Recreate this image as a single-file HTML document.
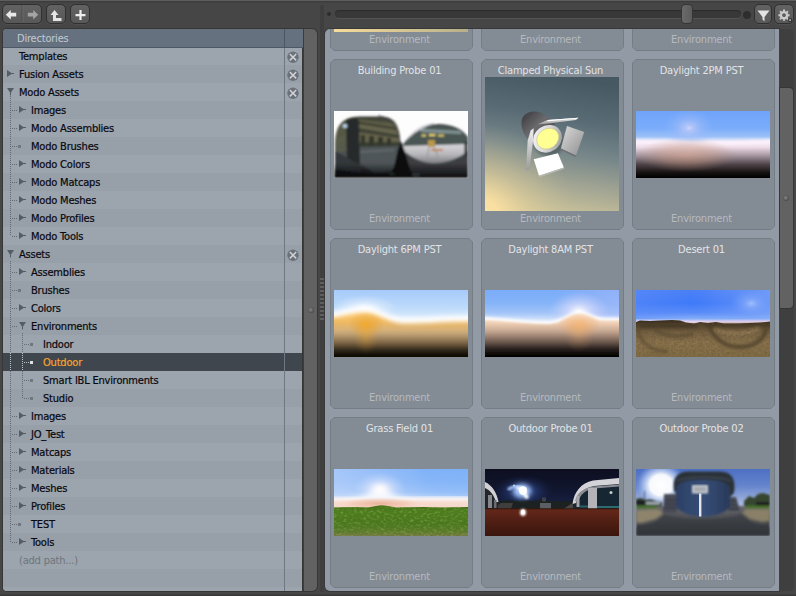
<!DOCTYPE html>
<html lang="en"><head><meta charset="utf-8"><title>Preset Browser</title>
<style>
html,body{margin:0;padding:0;background:#464646;}
body{width:796px;height:596px;overflow:hidden;font-family:"DejaVu Sans Condensed","DejaVu Sans","Liberation Sans",sans-serif;font-size:11px;letter-spacing:-0.2px;}
#app{position:relative;width:796px;height:596px;overflow:hidden;background:#464646;}
#app i{display:block;position:absolute;}
#topline{position:absolute;left:0;top:0;width:796px;height:3px;background:linear-gradient(#5e5e5e 0 1px,#3d3d3d 1px 2px,#424242 2px 3px);}
#botline{position:absolute;left:0;top:594px;width:796px;height:2px;background:linear-gradient(#3e3e3e 0 1px,#383838 1px 2px);}
.btn{position:absolute;top:4px;height:20px;box-sizing:border-box;border:1px solid #303030;border-radius:5px;background:linear-gradient(#626262,#585858);box-shadow:0 1px 0 rgba(255,255,255,.05);}
.btn svg{position:absolute;left:0;top:0;}
#track{position:absolute;left:335px;top:10px;width:406px;height:8px;border-radius:4px;background:#383838;box-shadow:inset 0 1px 1px #2c2c2c,0 1px 0 rgba(255,255,255,.07);}
#handle{position:absolute;left:681px;top:4px;width:12px;height:20px;box-sizing:border-box;border:1px solid #353535;border-radius:4px;background:linear-gradient(90deg,#6a6a6a,#5c5c5c);}
.dot{position:absolute;border-radius:50%;background:#2e2e2e;}
/* left panel */
#left{position:absolute;left:3px;top:29px;width:300px;height:562px;background:#99a1aa;overflow:hidden;border-radius:4px 0 0 4px;box-shadow:0 0 0 1px #363636;}
#lhead{position:absolute;left:0;top:0;width:300px;height:18px;background:#65717e;color:#c3cad2;z-index:3;}
#lline{position:absolute;left:0;top:18px;width:300px;height:1px;background:#4c5864;z-index:3;}
#lhead span{position:absolute;left:14px;top:3px;line-height:14px;}
.row{position:absolute;left:0;width:300px;height:18px;background:#9ca4ad;}
.row.odd{background:#979fa8;}
.row.sel{background:#3f464e;}
.row .tx{position:absolute;top:3px;line-height:14px;color:#08080f;white-space:nowrap;-webkit-text-stroke:0.2px #08080f;}
.row .tx.dim{color:#6d757e;-webkit-text-stroke:0;}
.row.sel .tx{color:#f5a52d;-webkit-text-stroke:0.2px #f5a52d;}
.row .ar{position:absolute;fill:#555c64;}
.row .bl{width:3px;height:3px;top:8px;background:#70777f;}
.row.sel .bl{background:#dfe2e5;}
.row .hd{width:5px;height:1px;top:9px;background:repeating-linear-gradient(90deg,#646a72 0 1px,transparent 1px 2px);}
.row.sel .hd{background:repeating-linear-gradient(90deg,#bcc0c4 0 1px,transparent 1px 2px);}
.row .xx{position:absolute;left:284px;top:4px;}
.vd{width:1px;background:repeating-linear-gradient(180deg,#646a72 0 1px,transparent 1px 2px);}
.vd.lt{background:repeating-linear-gradient(180deg,#bcc0c4 0 1px,#3f464e 1px 2px);}
#colsep{left:281px;top:0;width:1px;height:562px;background:linear-gradient(#4c5662 0 19px,#6e7782 19px);z-index:4;}
/* splitter */
#split{position:absolute;left:303px;top:29px;width:14px;height:562px;background:#626262;border-radius:0 5px 5px 0;border-left:1px solid #3c3c3c;box-sizing:border-box;box-shadow:0 0 0 1px #363636;}
.knob{left:4px;top:278px;width:6px;height:6px;border-radius:50%;background:radial-gradient(circle at 45% 45%,#767676 0 25%,#444 75%);}
#gap{position:absolute;left:320px;top:5px;width:4px;height:587px;background:#3f3f3f;}
#grip{position:absolute;left:320px;top:278px;width:4px;height:43px;background:repeating-linear-gradient(180deg,#5e5e5e 0 2px,#3f3f3f 2px 4px);}
/* right panel */
#right{position:absolute;left:325px;top:29px;width:454px;height:562px;background:#929ba5;overflow:hidden;border-radius:5px 0 0 5px;box-shadow:0 0 0 1px #383838;}
.tile{position:absolute;width:143px;height:171px;}
.tile svg.bg{position:absolute;left:0;top:0;}
.tile .tt{position:absolute;left:0;width:139px;top:5px;line-height:14px;text-align:center;color:#e2e4e6;white-space:nowrap;}
.tile .tb{position:absolute;left:0;width:139px;top:153px;line-height:14px;text-align:center;color:#b6babf;white-space:nowrap;}
.tile .im{position:absolute;left:4px;top:52px;width:134px;height:67px;overflow:hidden;}
.tile .im svg{display:block;}
/* scrollbar */
#sbar{position:absolute;left:779px;top:29px;width:15px;height:562px;background:#3f3f3f;border-radius:0 5px 5px 0;}
#sthumb{left:1px;top:59px;width:13px;height:220px;background:#626262;border-radius:0 4px 4px 0;box-shadow:0 0 0 1px #363636;}
.knob2{left:4px;top:166px;width:6px;height:6px;border-radius:50%;background:radial-gradient(circle at 45% 45%,#767676 0 25%,#444 75%);}

</style></head><body>
<div id="app">
<div id="topline"></div><div id="botline"></div>
<div class="btn" style="left:2px;width:40px;">
<svg style="left:1px" width="38" height="19" viewBox="0 0 38 19"><rect x="17.5" y="0" width="1" height="17" fill="#4a4a4a"/><rect x="18.5" y="0" width="1" height="17" fill="#686868"/>
<path d="M1.8 9.7 L6.8 5 L6.8 7.8 L12.2 7.8 L12.2 11.6 L6.8 11.6 L6.8 14.4Z" fill="#e8e8e8"/>
<path d="M34.2 9.7 L29.2 5 L29.2 7.8 L23.8 7.8 L23.8 11.6 L29.2 11.6 L29.2 14.4Z" fill="#a4a4a4"/></svg>
</div>
<div class="btn" style="left:46px;width:20px;">
<svg style="left:1px" width="19" height="19" viewBox="0 0 19 19"><path d="M6.5 5 L10.5 10 L8 10 L8 13 L13.5 13 L13.5 16 L5 16 L5 10 L2.5 10Z" fill="#e6e6e6"/></svg>
</div>
<div class="btn" style="left:70px;width:20px;">
<svg style="left:1px" width="19" height="19" viewBox="0 0 19 19"><path d="M7.4 5.1 h2.2 v3.9 h3.9 v2.2 h-3.9 v3.9 h-2.2 v-3.9 h-3.9 v-2.2 h3.9z" fill="#eeeeee"/></svg>
</div>
<div class="dot" style="left:327px;top:12px;width:4px;height:4px;"></div>
<div id="track"></div>
<div id="handle"></div>
<div class="dot" style="left:743px;top:11px;width:8px;height:8px;"></div>
<div class="btn" style="left:754px;width:18px;">
<svg style="left:1px" width="17" height="19" viewBox="0 0 17 19"><path d="M1.5 5.5 L13.5 5.5 L8.5 12 L8.5 16.5 L6.5 14.5 L6.5 12Z" fill="#e2e2e2"/></svg>
</div>
<div class="btn" style="left:774px;width:20px;">
<svg style="left:1px" width="19" height="19" viewBox="0 0 19 19"><g transform="translate(8,10.2)"><circle r="3.1" fill="none" stroke="#cccccc" stroke-width="2.4"/><g stroke="#cccccc" stroke-width="2"><path d="M0 -5.6 V-4 M0 5.6 V4 M-5.6 0 H-4 M5.6 0 H4 M-4 -4 L-2.8 -2.8 M4 4 L2.8 2.8 M-4 4 L-2.8 2.8 M4 -4 L2.8 -2.8"/></g></g><rect x="12.8" y="13.8" width="2.6" height="2.6" fill="#cfcfcf" stroke="#2a2a2a" stroke-width="1"/></svg>
</div>
<div id="left">
<div id="lhead"><span>Directories</span></div><div id="lline"></div>
<div class="row" style="top:18px"><span class="tx" style="left:16px">Templates</span><svg class="xx" width="12" height="12" viewBox="0 0 12 12"><circle cx="6" cy="6.2" r="5.7" fill="#6b7179"/><path d="M2.8 3 L9.2 9.4 M9.2 3 L2.8 9.4" stroke="#cfd2d6" stroke-width="1.5" fill="none"/></svg></div>
<div class="row odd" style="top:36px"><svg class="ar" style="left:4px;top:5px" width="8" height="8" viewBox="0 0 8 8"><path d="M0 0 L4.5 3 L7 3 L7 4 L4.5 4 L0 7Z"/></svg><span class="tx" style="left:16px">Fusion Assets</span><svg class="xx" width="12" height="12" viewBox="0 0 12 12"><circle cx="6" cy="6.2" r="5.7" fill="#6b7179"/><path d="M2.8 3 L9.2 9.4 M9.2 3 L2.8 9.4" stroke="#cfd2d6" stroke-width="1.5" fill="none"/></svg></div>
<div class="row" style="top:54px"><svg class="ar" style="left:4px;top:5px" width="8" height="9" viewBox="0 0 8 9"><path d="M0 0 L7 0 L4 4.5 L4 7.5 L3 7.5 L3 4.5Z"/></svg><span class="tx" style="left:16px">Modo Assets</span><svg class="xx" width="12" height="12" viewBox="0 0 12 12"><circle cx="6" cy="6.2" r="5.7" fill="#6b7179"/><path d="M2.8 3 L9.2 9.4 M9.2 3 L2.8 9.4" stroke="#cfd2d6" stroke-width="1.5" fill="none"/></svg></div>
<div class="row odd" style="top:72px"><i class="hd" style="left:9px"></i><svg class="ar" style="left:16px;top:5px" width="8" height="8" viewBox="0 0 8 8"><path d="M0 0 L4.5 3 L7 3 L7 4 L4.5 4 L0 7Z"/></svg><span class="tx" style="left:28px">Images</span></div>
<div class="row" style="top:90px"><i class="hd" style="left:9px"></i><svg class="ar" style="left:16px;top:5px" width="8" height="8" viewBox="0 0 8 8"><path d="M0 0 L4.5 3 L7 3 L7 4 L4.5 4 L0 7Z"/></svg><span class="tx" style="left:28px">Modo Assemblies</span></div>
<div class="row odd" style="top:108px"><i class="hd" style="left:9px"></i><i class="bl" style="left:15px"></i><span class="tx" style="left:28px">Modo Brushes</span></div>
<div class="row" style="top:126px"><i class="hd" style="left:9px"></i><svg class="ar" style="left:16px;top:5px" width="8" height="8" viewBox="0 0 8 8"><path d="M0 0 L4.5 3 L7 3 L7 4 L4.5 4 L0 7Z"/></svg><span class="tx" style="left:28px">Modo Colors</span></div>
<div class="row odd" style="top:144px"><i class="hd" style="left:9px"></i><svg class="ar" style="left:16px;top:5px" width="8" height="8" viewBox="0 0 8 8"><path d="M0 0 L4.5 3 L7 3 L7 4 L4.5 4 L0 7Z"/></svg><span class="tx" style="left:28px">Modo Matcaps</span></div>
<div class="row" style="top:162px"><i class="hd" style="left:9px"></i><svg class="ar" style="left:16px;top:5px" width="8" height="8" viewBox="0 0 8 8"><path d="M0 0 L4.5 3 L7 3 L7 4 L4.5 4 L0 7Z"/></svg><span class="tx" style="left:28px">Modo Meshes</span></div>
<div class="row odd" style="top:180px"><i class="hd" style="left:9px"></i><svg class="ar" style="left:16px;top:5px" width="8" height="8" viewBox="0 0 8 8"><path d="M0 0 L4.5 3 L7 3 L7 4 L4.5 4 L0 7Z"/></svg><span class="tx" style="left:28px">Modo Profiles</span></div>
<div class="row" style="top:198px"><i class="hd" style="left:9px"></i><svg class="ar" style="left:16px;top:5px" width="8" height="8" viewBox="0 0 8 8"><path d="M0 0 L4.5 3 L7 3 L7 4 L4.5 4 L0 7Z"/></svg><span class="tx" style="left:28px">Modo Tools</span></div>
<div class="row odd" style="top:216px"><svg class="ar" style="left:4px;top:5px" width="8" height="9" viewBox="0 0 8 9"><path d="M0 0 L7 0 L4 4.5 L4 7.5 L3 7.5 L3 4.5Z"/></svg><span class="tx" style="left:16px">Assets</span><svg class="xx" width="12" height="12" viewBox="0 0 12 12"><circle cx="6" cy="6.2" r="5.7" fill="#6b7179"/><path d="M2.8 3 L9.2 9.4 M9.2 3 L2.8 9.4" stroke="#cfd2d6" stroke-width="1.5" fill="none"/></svg></div>
<div class="row" style="top:234px"><i class="hd" style="left:9px"></i><svg class="ar" style="left:16px;top:5px" width="8" height="8" viewBox="0 0 8 8"><path d="M0 0 L4.5 3 L7 3 L7 4 L4.5 4 L0 7Z"/></svg><span class="tx" style="left:28px">Assemblies</span></div>
<div class="row odd" style="top:252px"><i class="hd" style="left:9px"></i><i class="bl" style="left:15px"></i><span class="tx" style="left:28px">Brushes</span></div>
<div class="row" style="top:270px"><i class="hd" style="left:9px"></i><svg class="ar" style="left:16px;top:5px" width="8" height="8" viewBox="0 0 8 8"><path d="M0 0 L4.5 3 L7 3 L7 4 L4.5 4 L0 7Z"/></svg><span class="tx" style="left:28px">Colors</span></div>
<div class="row odd" style="top:288px"><i class="hd" style="left:9px"></i><svg class="ar" style="left:16px;top:5px" width="8" height="9" viewBox="0 0 8 9"><path d="M0 0 L7 0 L4 4.5 L4 7.5 L3 7.5 L3 4.5Z"/></svg><span class="tx" style="left:28px">Environments</span></div>
<div class="row" style="top:306px"><i class="hd" style="left:21px"></i><i class="bl" style="left:27px"></i><span class="tx" style="left:40px">Indoor</span></div>
<div class="row odd sel" style="top:324px"><i class="hd" style="left:21px"></i><i class="bl" style="left:27px"></i><span class="tx" style="left:40px">Outdoor</span></div>
<div class="row" style="top:342px"><i class="hd" style="left:21px"></i><i class="bl" style="left:27px"></i><span class="tx" style="left:40px">Smart IBL Environments</span></div>
<div class="row odd" style="top:360px"><i class="hd" style="left:21px"></i><i class="bl" style="left:27px"></i><span class="tx" style="left:40px">Studio</span></div>
<div class="row" style="top:378px"><i class="hd" style="left:9px"></i><svg class="ar" style="left:16px;top:5px" width="8" height="8" viewBox="0 0 8 8"><path d="M0 0 L4.5 3 L7 3 L7 4 L4.5 4 L0 7Z"/></svg><span class="tx" style="left:28px">Images</span></div>
<div class="row odd" style="top:396px"><i class="hd" style="left:9px"></i><svg class="ar" style="left:16px;top:5px" width="8" height="8" viewBox="0 0 8 8"><path d="M0 0 L4.5 3 L7 3 L7 4 L4.5 4 L0 7Z"/></svg><span class="tx" style="left:28px">JO_Test</span></div>
<div class="row" style="top:414px"><i class="hd" style="left:9px"></i><svg class="ar" style="left:16px;top:5px" width="8" height="8" viewBox="0 0 8 8"><path d="M0 0 L4.5 3 L7 3 L7 4 L4.5 4 L0 7Z"/></svg><span class="tx" style="left:28px">Matcaps</span></div>
<div class="row odd" style="top:432px"><i class="hd" style="left:9px"></i><svg class="ar" style="left:16px;top:5px" width="8" height="8" viewBox="0 0 8 8"><path d="M0 0 L4.5 3 L7 3 L7 4 L4.5 4 L0 7Z"/></svg><span class="tx" style="left:28px">Materials</span></div>
<div class="row" style="top:450px"><i class="hd" style="left:9px"></i><svg class="ar" style="left:16px;top:5px" width="8" height="8" viewBox="0 0 8 8"><path d="M0 0 L4.5 3 L7 3 L7 4 L4.5 4 L0 7Z"/></svg><span class="tx" style="left:28px">Meshes</span></div>
<div class="row odd" style="top:468px"><i class="hd" style="left:9px"></i><svg class="ar" style="left:16px;top:5px" width="8" height="8" viewBox="0 0 8 8"><path d="M0 0 L4.5 3 L7 3 L7 4 L4.5 4 L0 7Z"/></svg><span class="tx" style="left:28px">Profiles</span></div>
<div class="row" style="top:486px"><i class="hd" style="left:9px"></i><i class="bl" style="left:15px"></i><span class="tx" style="left:28px">TEST</span></div>
<div class="row odd" style="top:504px"><i class="hd" style="left:9px"></i><svg class="ar" style="left:16px;top:5px" width="8" height="8" viewBox="0 0 8 8"><path d="M0 0 L4.5 3 L7 3 L7 4 L4.5 4 L0 7Z"/></svg><span class="tx" style="left:28px">Tools</span></div>
<div class="row" style="top:522px"><span class="tx dim" style="left:16px">(add path...)</span></div>
<div class="row odd" style="top:540px"></div>
<div class="row" style="top:558px"></div>
<i class="vd" style="left:7px;top:67px;height:140px"></i>
<i class="vd" style="left:7px;top:232px;height:281px"></i>
<i class="vd" style="left:19px;top:304px;height:65px"></i>
<i class="vd lt" style="left:7px;top:324px;height:18px"></i>
<i class="vd lt" style="left:19px;top:324px;height:18px"></i>
<i id="colsep"></i>
</div>
<div id="split"><i class="knob"></i></div>
<div id="gap"></div><div id="grip"></div>
<div id="right">
<div class="tile" style="left:5px;top:-149px"><svg class="bg" width="143" height="171" viewBox="0 0 143 171"><polygon points="4,0.5 139,0.5 142.5,4 142.5,167 139,170.5 4,170.5 0.5,167 0.5,4" fill="#838b94" stroke="#747c86" stroke-width="1"/></svg><div class="im" style="top:18px;height:134px"><svg width="134" height="134" viewBox="0 0 134 134"><defs><linearGradient id="gs" x1="0" y1="0" x2="1" y2="0"><stop offset="0" stop-color="#f5dc9a"/><stop offset="1" stop-color="#b8b08c"/></linearGradient></defs><rect width="134" height="134" fill="url(#gs)"/></svg>
</div><div class="tb">Environment</div></div>
<div class="tile" style="left:156px;top:-149px"><svg class="bg" width="143" height="171" viewBox="0 0 143 171"><polygon points="4,0.5 139,0.5 142.5,4 142.5,167 139,170.5 4,170.5 0.5,167 0.5,4" fill="#838b94" stroke="#747c86" stroke-width="1"/></svg><div class="tb">Environment</div></div>
<div class="tile" style="left:307px;top:-149px"><svg class="bg" width="143" height="171" viewBox="0 0 143 171"><polygon points="4,0.5 139,0.5 142.5,4 142.5,167 139,170.5 4,170.5 0.5,167 0.5,4" fill="#838b94" stroke="#747c86" stroke-width="1"/></svg><div class="tb">Environment</div></div>
<div class="tile" style="left:5px;top:30px"><svg class="bg" width="143" height="171" viewBox="0 0 143 171"><polygon points="4,0.5 139,0.5 142.5,4 142.5,167 139,170.5 4,170.5 0.5,167 0.5,4" fill="#838b94" stroke="#747c86" stroke-width="1"/></svg><div class="tt">Building Probe 01</div><div class="im" style=""><svg width="134" height="67" viewBox="0 0 134 67"><defs>
<filter id="bpf" x="-10%" y="-10%" width="120%" height="120%"><feGaussianBlur stdDeviation="0.9"/></filter>
<filter id="bpg" x="-30%" y="-30%" width="160%" height="160%"><feGaussianBlur stdDeviation="2"/></filter>
<linearGradient id="bpa" gradientUnits="userSpaceOnUse" x1="0" y1="5" x2="0" y2="67"><stop offset="0" stop-color="#34382f"/><stop offset="0.15" stop-color="#5a5c48"/><stop offset="0.42" stop-color="#52543f"/><stop offset="0.5" stop-color="#4c5250"/><stop offset="0.75" stop-color="#4a4e50"/><stop offset="0.9" stop-color="#26282a"/><stop offset="1" stop-color="#101214"/></linearGradient>
<linearGradient id="bpb" gradientUnits="userSpaceOnUse" x1="0" y1="33" x2="0" y2="67"><stop offset="0" stop-color="#d8d8dc"/><stop offset="0.3" stop-color="#b8b8bc"/><stop offset="0.5" stop-color="#8c8c90"/><stop offset="1" stop-color="#8c8c90"/></linearGradient>
<linearGradient id="bpc" x1="0" y1="0" x2="0" y2="1"><stop offset="0" stop-color="#0c0e10" stop-opacity="0"/><stop offset="0.6" stop-color="#0c0e10" stop-opacity=".6"/><stop offset="1" stop-color="#0a0b0c" stop-opacity=".95"/></linearGradient>
</defs>
<rect width="134" height="67" fill="#fdfdfd"/>
<g filter="url(#bpf)">
<!-- left sphere -->
<path d="M1 67 L1 34 C1 14 8 6 26 5.5 L48 5.5 C62 6 66 16 66.5 34 L67 67Z" fill="url(#bpa)"/>
<path d="M22 8 L62 14 L65 30 L66 36 L40 33 L22 33Z" fill="#68664e" opacity=".9"/>
<path d="M24 17 L64 24 L64 27 L24 21Z" fill="#34382e" opacity=".8"/>
<path d="M27 24 H31 V34 H27Z M35 25 H40 V35 H35Z M44 26 H49 V35 H44Z M53 27 H57 V35 H53Z" fill="#2a2c26" opacity=".85"/><path d="M24 10 L62 16 L62 19 L24 13Z" fill="#34362c" opacity=".7"/><rect x="26" y="31" width="40" height="5" fill="#34392e" opacity=".85"/>
<path d="M12 10 C14 7 22 7 25 9 L26 52 C22 58 16 56 13 50Z" fill="#262c2c"/>
<path d="M2 28 L12 22 L12 40 L2 42Z" fill="#5a5c4c" opacity=".8"/>
<path d="M26 36 L66 35 L66 60 L40 62 L26 52Z" fill="#50565a" opacity=".9"/>
<path d="M26 41 L60 39" stroke="#767c80" stroke-width="1.5" opacity=".6"/>
<path d="M1 56 L14 60 L30 62.5 L60 63.5 L67 62 L67 67 L1 67Z" fill="#141618"/><path d="M1 40 L12 46 L26 54 L26 62 L1 58Z" fill="#33383a"/>
<ellipse cx="11" cy="15" rx="2.5" ry="2" fill="#b8d0e8"/>
<!-- right sphere -->
<path d="M68 67 L68 35 C78 22 92 14 104 13 C118 13 128 18 134 26 L134 67Z" fill="#42484a"/>
<path d="M70 33 C80 22 94 15 106 15 C118 15 128 20 134 27 L134 33 L70 34Z" fill="#4a5652"/>
<path d="M88 18 L126 20 L128 23 L86 21Z" fill="#9cb0b4" opacity=".7"/>
<path d="M68 35 L134 33 L134 40 C124 48 112 52 100 52 C88 52 76 46 68 38Z" fill="url(#bpb)"/>
<path d="M68 40 C76 48 88 54 100 54 C112 54 124 50 134 42 L134 67 L68 67Z" fill="#3c3e42"/>
<rect x="94" y="29" width="7" height="7" fill="#b89848"/>
<rect x="87.5" y="23.5" width="4.5" height="2" fill="#e8d070"/><rect x="95" y="23" width="6.5" height="2.2" fill="#e8d070"/><rect x="104" y="23.5" width="6" height="2" fill="#e0c868"/>
<rect x="97" y="38" width="12" height="1.8" fill="#c87838"/>
<path d="M95 36 L93 46 M100 36 L104 46" stroke="#9c948c" stroke-width="1.2"/>
<rect x="130.5" y="31" width="3" height="14" fill="#2a2c2e"/>
<!-- centre wedge -->
<path d="M64 38 L67 30 L70 38 L76 58 L80 67 L54 67 L60 56Z" fill="#08090a"/>
<path d="M66 36 C66 20 60 8 44 4.5" stroke="#3c3850" stroke-width="1" fill="none" opacity=".8"/>
<path d="M69 34 C76 22 88 14 100 13" stroke="#58586c" stroke-width="0.8" fill="none" opacity=".8"/>
<ellipse cx="82" cy="64" rx="4" ry="1.2" fill="#a8c8d8"/><ellipse cx="58" cy="63" rx="3" ry="1" fill="#6c8088"/>
<rect x="0" y="52" width="134" height="15" fill="url(#bpc)"/><rect x="0" y="65.5" width="134" height="1.5" fill="#0c0d0e"/>
</g>
</svg>
</div><div class="tb">Environment</div></div>
<div class="tile" style="left:156px;top:30px"><svg class="bg" width="143" height="171" viewBox="0 0 143 171"><polygon points="4,0.5 139,0.5 142.5,4 142.5,167 139,170.5 4,170.5 0.5,167 0.5,4" fill="#838b94" stroke="#747c86" stroke-width="1"/></svg><div class="tt">Clamped Physical Sun</div><div class="im" style="top:18px;height:134px"><svg width="134" height="134" viewBox="0 0 134 134"><defs>
<linearGradient id="cla" x1="0.58" y1="0" x2="0.42" y2="1"><stop offset="0" stop-color="#465862"/><stop offset="0.3" stop-color="#596b75"/><stop offset="0.55" stop-color="#77878a"/><stop offset="0.8" stop-color="#a6a894"/><stop offset="1" stop-color="#cac29a"/></linearGradient>
<radialGradient id="clr" gradientUnits="userSpaceOnUse" cx="-8" cy="146" r="125"><stop offset="0" stop-color="#ffe8a8" stop-opacity="1"/><stop offset="0.2" stop-color="#fde2a2" stop-opacity=".9"/><stop offset="0.42" stop-color="#ecd69c" stop-opacity=".45"/><stop offset="0.8" stop-color="#c8c098" stop-opacity="0"/></radialGradient>
<linearGradient id="clb" x1="0" y1="0" x2="1" y2="1"><stop offset="0" stop-color="#38383a"/><stop offset="0.45" stop-color="#6a6a6e"/><stop offset="1" stop-color="#3a3a3c"/></linearGradient>
<linearGradient id="clc" x1="0" y1="0" x2="1" y2="1"><stop offset="0" stop-color="#fafafa"/><stop offset="0.5" stop-color="#d8d8d8"/><stop offset="1" stop-color="#8c8c8c"/></linearGradient>
<linearGradient id="cld" x1="0" y1="0" x2="1" y2="1"><stop offset="0" stop-color="#dcdcdc"/><stop offset="1" stop-color="#8e8e90"/></linearGradient>
<linearGradient id="cle" x1="0" y1="0" x2="0" y2="1"><stop offset="0" stop-color="#f0f0f0"/><stop offset="1" stop-color="#9a9a9a"/></linearGradient>
<filter id="clf" x="-10%" y="-10%" width="120%" height="120%"><feGaussianBlur stdDeviation="0.45"/></filter>
<filter id="clg" x="-30%" y="-30%" width="160%" height="160%"><feGaussianBlur stdDeviation="1.5"/></filter>
</defs>
<rect width="134" height="134" fill="url(#cla)"/><rect width="134" height="134" fill="url(#clr)"/>
<g filter="url(#clf)">
<ellipse cx="64" cy="66" rx="15" ry="13" fill="#20262a" opacity=".35" filter="url(#clg)"/>
<path d="M37 42 C40 34 52 32 60 38 L70 47 L52 68 C44 66 34 54 37 42Z" fill="url(#clb)"/>
<polygon points="52.5,47.5 62.3,43 93.3,40.7 91,43 65.3,46.3" fill="url(#cle)"/>
<polygon points="62.3,43 93.3,40.7 92.6,41.6 63,44.2" fill="#fff"/>
<g transform="rotate(-35 62.5 61.8)"><ellipse cx="62.5" cy="61.8" rx="15" ry="13.2" fill="url(#clc)"/><ellipse cx="62.8" cy="61.8" rx="11.6" ry="9.8" fill="#ffff92"/><ellipse cx="62.8" cy="61.8" rx="11.6" ry="9.8" fill="none" stroke="#c8c890" stroke-width="0.6"/></g>
<polygon points="45.7,53.5 48.6,51.3 48.2,63.3 44.4,92 41,93.8 42.7,63.3" fill="url(#cle)"/>
<polygon points="82,49 99.3,55 91,78.6 75.9,71.6" fill="url(#cld)"/>
<polygon points="91,78.6 75.9,71.6 75.5,72.8 90.5,80" fill="#707074"/>
<polygon points="48.7,82.2 72.9,76.2 78.9,90.5 54,98.8" fill="#fff"/>
<polygon points="54,98.8 78.9,90.5 79.2,91.8 54.5,100.2" fill="#b8b8b4"/>
</g>
</svg>
</div><div class="tb">Environment</div></div>
<div class="tile" style="left:307px;top:30px"><svg class="bg" width="143" height="171" viewBox="0 0 143 171"><polygon points="4,0.5 139,0.5 142.5,4 142.5,167 139,170.5 4,170.5 0.5,167 0.5,4" fill="#838b94" stroke="#747c86" stroke-width="1"/></svg><div class="tt">Daylight 2PM PST</div><div class="im" style=""><svg width="134" height="67" viewBox="0 0 134 67"><defs>
<linearGradient id="d2a" x1="0" y1="0" x2="0" y2="1"><stop offset="0" stop-color="#70a4fa"/><stop offset="0.26" stop-color="#7aacfa"/><stop offset="0.38" stop-color="#9cc0f8"/><stop offset="0.43" stop-color="#d4e0f8"/><stop offset="0.465" stop-color="#fbf0fa"/><stop offset="0.54" stop-color="#eedde8"/><stop offset="0.66" stop-color="#a898a2"/><stop offset="0.8" stop-color="#4c4247"/><stop offset="0.92" stop-color="#161212"/><stop offset="1" stop-color="#000"/></linearGradient>
<radialGradient id="d2b" cx="0.5" cy="0.5" r="0.5"><stop offset="0" stop-color="#ccd8fa" stop-opacity="1"/><stop offset="0.12" stop-color="#b8c8f8" stop-opacity=".9"/><stop offset="0.5" stop-color="#a0bcf8" stop-opacity=".5"/><stop offset="1" stop-color="#8cb4f8" stop-opacity="0"/></radialGradient>
<radialGradient id="d2c" cx="0.5" cy="0.5" r="0.5"><stop offset="0" stop-color="#dca48a" stop-opacity=".55"/><stop offset="0.5" stop-color="#c89880" stop-opacity=".4"/><stop offset="1" stop-color="#b08878" stop-opacity="0"/></radialGradient>
<filter id="d2f" x="-20%" y="-50%" width="140%" height="200%"><feGaussianBlur stdDeviation="1.6"/></filter>
</defs><rect width="134" height="67" fill="url(#d2a)"/>
<ellipse cx="53" cy="17" rx="26" ry="19" fill="url(#d2b)"/>
<path d="M-5 30 C20 30 40 31 60 32.5 C80 34 100 32 139 29.5" fill="none" stroke="#fdf2fc" stroke-width="2.5" filter="url(#d2f)"/>
<ellipse cx="50" cy="44" rx="50" ry="17" fill="url(#d2c)"/></svg>
</div><div class="tb">Environment</div></div>
<div class="tile" style="left:5px;top:209px"><svg class="bg" width="143" height="171" viewBox="0 0 143 171"><polygon points="4,0.5 139,0.5 142.5,4 142.5,167 139,170.5 4,170.5 0.5,167 0.5,4" fill="#838b94" stroke="#747c86" stroke-width="1"/></svg><div class="tt">Daylight 6PM PST</div><div class="im" style=""><svg width="134" height="67" viewBox="0 0 134 67"><defs>
<linearGradient id="s6a" x1="0" y1="0" x2="0" y2="1"><stop offset="0" stop-color="#a6cbfa"/><stop offset="0.2" stop-color="#b7d6fa"/><stop offset="0.36" stop-color="#cce3fb"/><stop offset="0.5" stop-color="#e4f0fc"/><stop offset="1" stop-color="#fff"/></linearGradient>
<linearGradient id="s6b" gradientUnits="userSpaceOnUse" x1="0" y1="25" x2="0" y2="67"><stop offset="0" stop-color="#fcc870"/><stop offset="0.16" stop-color="#f0b960"/><stop offset="0.40" stop-color="#d0b080"/><stop offset="0.65" stop-color="#806848"/><stop offset="0.83" stop-color="#2e2618"/><stop offset="1" stop-color="#000"/></linearGradient>
<radialGradient id="s6c" cx="0.5" cy="0.5" r="0.5"><stop offset="0" stop-color="#f6a81c" stop-opacity=".95"/><stop offset="0.4" stop-color="#eca228" stop-opacity=".55"/><stop offset="1" stop-color="#dc9828" stop-opacity="0"/></radialGradient>
<radialGradient id="s6e" cx="0.5" cy="0.5" r="0.5"><stop offset="0" stop-color="#fff" stop-opacity=".8"/><stop offset="0.5" stop-color="#fff" stop-opacity=".35"/><stop offset="1" stop-color="#fff" stop-opacity="0"/></radialGradient>
<filter id="s6f" x="-20%" y="-50%" width="140%" height="200%"><feGaussianBlur stdDeviation="2.4"/></filter>
<filter id="s6g" x="-20%" y="-50%" width="140%" height="200%"><feGaussianBlur stdDeviation="2"/></filter>
<clipPath id="s6k"><path d="M-10 27 C8 26 16 21 30 21 C46 21 52 32 72 32 C95 32 110 30 144 30 L144 80 L-10 80Z"/></clipPath>
</defs>
<rect width="134" height="67" fill="url(#s6a)"/>
<ellipse cx="31" cy="18" rx="32" ry="13" fill="url(#s6e)"/>
<path d="M-10 22.5 C8 21.5 16 16.5 30 16.5 C46 16.5 52 27.5 72 27.5 C95 27.5 110 25.5 144 25.5 L144 80 L-10 80Z" fill="#fff" filter="url(#s6f)"/>
<path d="M-10 28.5 C8 27.5 16 22.5 30 22.5 C46 22.5 52 33.5 72 33.5 C95 33.5 110 31.5 144 31.5 L144 80 L-10 80Z" fill="url(#s6b)" filter="url(#s6g)"/>
<ellipse cx="32" cy="35" rx="18" ry="13" fill="url(#s6c)" opacity=".85"/><ellipse cx="32" cy="47" rx="13" ry="17" fill="url(#s6c)" opacity=".35"/>
</svg>
</div><div class="tb">Environment</div></div>
<div class="tile" style="left:156px;top:209px"><svg class="bg" width="143" height="171" viewBox="0 0 143 171"><polygon points="4,0.5 139,0.5 142.5,4 142.5,167 139,170.5 4,170.5 0.5,167 0.5,4" fill="#838b94" stroke="#747c86" stroke-width="1"/></svg><div class="tt">Daylight 8AM PST</div><div class="im" style=""><svg width="134" height="67" viewBox="0 0 134 67"><defs>
<linearGradient id="s8a" x1="0" y1="0" x2="0" y2="1"><stop offset="0" stop-color="#7aacf8"/><stop offset="0.2" stop-color="#86b4f8"/><stop offset="0.34" stop-color="#a2c4f8"/><stop offset="0.44" stop-color="#cfe0fa"/><stop offset="1" stop-color="#f4f6fc"/></linearGradient>
<linearGradient id="s8h" x1="0" y1="0" x2="1" y2="0"><stop offset="0" stop-color="#a8b8f8" stop-opacity="0"/><stop offset="0.5" stop-color="#a8b8f8" stop-opacity="0"/><stop offset="1" stop-color="#a8b8f8" stop-opacity=".5"/></linearGradient>
<linearGradient id="s8b" gradientUnits="userSpaceOnUse" x1="0" y1="27" x2="0" y2="67"><stop offset="0" stop-color="#fbe2cc"/><stop offset="0.15" stop-color="#f0d0b6"/><stop offset="0.36" stop-color="#c4a690"/><stop offset="0.58" stop-color="#7c665a"/><stop offset="0.78" stop-color="#2e2622"/><stop offset="0.92" stop-color="#0c0908"/><stop offset="1" stop-color="#000"/></linearGradient>
<radialGradient id="s8c" cx="0.5" cy="0.5" r="0.5"><stop offset="0" stop-color="#f6b068" stop-opacity=".85"/><stop offset="0.45" stop-color="#eea860" stop-opacity=".5"/><stop offset="1" stop-color="#e0a068" stop-opacity="0"/></radialGradient>
<radialGradient id="s8e" cx="0.5" cy="0.5" r="0.5"><stop offset="0" stop-color="#fff" stop-opacity=".95"/><stop offset="0.35" stop-color="#ece8fc" stop-opacity=".6"/><stop offset="1" stop-color="#d0d4fa" stop-opacity="0"/></radialGradient>
<filter id="s8f" x="-20%" y="-50%" width="140%" height="200%"><feGaussianBlur stdDeviation="1.5"/></filter>
<filter id="s8g" x="-20%" y="-50%" width="140%" height="200%"><feGaussianBlur stdDeviation="1.3"/></filter>
</defs>
<rect width="134" height="67" fill="url(#s8a)"/>
<rect width="134" height="30" fill="url(#s8h)"/>
<ellipse cx="94" cy="21" rx="30" ry="19" fill="url(#s8e)"/>
<path d="M-10 26.5 C20 27.5 40 31 62 31 C78 31 84 21 94 21 C104 21 108 27.5 120 27.5 L144 27.5 L144 80 L-10 80Z" fill="#fff" filter="url(#s8f)"/>
<path d="M-10 29.5 C20 30.5 40 34 62 34 C78 34 84 24 94 24 C104 24 108 30.5 120 30.5 L144 30.5 L144 80 L-10 80Z" fill="url(#s8b)" filter="url(#s8g)"/>
<ellipse cx="94" cy="35" rx="22" ry="13" fill="url(#s8c)" opacity=".85"/><ellipse cx="94" cy="46" rx="15" ry="16" fill="url(#s8c)" opacity=".3"/>
</svg>
</div><div class="tb">Environment</div></div>
<div class="tile" style="left:307px;top:209px"><svg class="bg" width="143" height="171" viewBox="0 0 143 171"><polygon points="4,0.5 139,0.5 142.5,4 142.5,167 139,170.5 4,170.5 0.5,167 0.5,4" fill="#838b94" stroke="#747c86" stroke-width="1"/></svg><div class="tt">Desert 01</div><div class="im" style=""><svg width="134" height="67" viewBox="0 0 134 67"><defs>
<linearGradient id="dsa" x1="0" y1="0" x2="0" y2="1"><stop offset="0" stop-color="#4c80f6"/><stop offset="0.2" stop-color="#3f7af8"/><stop offset="0.34" stop-color="#5a8cf8"/><stop offset="0.43" stop-color="#86aef8"/><stop offset="0.47" stop-color="#e4d4f0"/><stop offset="0.5" stop-color="#f6dce8"/><stop offset="1" stop-color="#f6dce8"/></linearGradient>
<radialGradient id="dsb" cx="0.5" cy="0.5" r="0.5"><stop offset="0" stop-color="#a4c0fc" stop-opacity=".95"/><stop offset="0.3" stop-color="#88acfa" stop-opacity=".65"/><stop offset="1" stop-color="#6c98f8" stop-opacity="0"/></radialGradient>
<linearGradient id="dsc" gradientUnits="userSpaceOnUse" x1="0" y1="30" x2="0" y2="67"><stop offset="0" stop-color="#382e1e"/><stop offset="0.16" stop-color="#54442e"/><stop offset="0.34" stop-color="#7a6444"/><stop offset="0.6" stop-color="#8e7650"/><stop offset="1" stop-color="#867048"/></linearGradient>
<linearGradient id="dsd" x1="0" y1="0" x2="1" y2="0"><stop offset="0" stop-color="#5c8cf8" stop-opacity=".5"/><stop offset="0.4" stop-color="#5c8cf8" stop-opacity="0"/><stop offset="0.6" stop-color="#78a0f8" stop-opacity=".2"/><stop offset="1" stop-color="#88acf8" stop-opacity=".6"/></linearGradient>
<filter id="dsf" x="-20%" y="-50%" width="140%" height="200%"><feGaussianBlur stdDeviation="1.4"/></filter>
<filter id="dsg" x="-5%" y="-20%" width="110%" height="140%"><feGaussianBlur stdDeviation="0.5"/></filter>
<filter id="dsn" x="0" y="0" width="100%" height="100%"><feTurbulence type="fractalNoise" baseFrequency="0.45" numOctaves="2" seed="3"/><feColorMatrix values="0 0 0 0 0.1  0 0 0 0 0.07  0 0 0 0 0.03  0.9 0.9 0 0 -0.55"/></filter>
</defs>
<rect width="134" height="67" fill="url(#dsa)"/>
<rect width="134" height="29" fill="url(#dsd)"/>
<ellipse cx="115.5" cy="13.5" rx="22" ry="15" fill="url(#dsb)"/>
<g filter="url(#dsg)">
<path d="M0 32 L4 30.5 L14 31 L24 30.5 L36 30 L44 30.5 L50 32.5 L58 33.5 L64 32 L72 33 L80 32 L88 33.5 L100 33.5 L112 33 L124 32.5 L130 32 L134 31.5 L134 67 L0 67Z" fill="url(#dsc)"/>
</g>
<g filter="url(#dsf)" fill="none" stroke-linecap="round">
<path d="M74 37 C78 50 92 58 106 57 C120 56 128 48 130 40" stroke="#4e4028" stroke-width="4" opacity=".85"/>
<path d="M2 40 C4 52 14 60 30 62" stroke="#5a4a30" stroke-width="3.5" opacity=".7"/>
<path d="M4 36 L60 36" stroke="#382c1c" stroke-width="3" opacity=".7"/>
<path d="M70 35 L134 35" stroke="#3a2e1e" stroke-width="2.5" opacity=".7"/>
<path d="M20 41 C30 46 44 48 56 44" stroke="#4a3c26" stroke-width="3" opacity=".6"/>
<path d="M66 36 L68 46" stroke="#6a5638" stroke-width="2" opacity=".6"/>
<path d="M80 40 C90 44 110 44 122 39" stroke="#b09468" stroke-width="4" opacity=".55"/>
</g>
<rect y="33.5" width="134" height="33.5" filter="url(#dsn)" opacity=".6"/>
</svg>
</div><div class="tb">Environment</div></div>
<div class="tile" style="left:5px;top:388px"><svg class="bg" width="143" height="171" viewBox="0 0 143 171"><polygon points="4,0.5 139,0.5 142.5,4 142.5,167 139,170.5 4,170.5 0.5,167 0.5,4" fill="#838b94" stroke="#747c86" stroke-width="1"/></svg><div class="tt">Grass Field 01</div><div class="im" style=""><svg width="134" height="67" viewBox="0 0 134 67"><defs>
<linearGradient id="gra" x1="0" y1="0" x2="0" y2="1"><stop offset="0" stop-color="#82b2f8"/><stop offset="0.2" stop-color="#90baf8"/><stop offset="0.34" stop-color="#a8c8f8"/><stop offset="0.40" stop-color="#c8dcfa"/><stop offset="0.445" stop-color="#f8f2f4"/><stop offset="0.5" stop-color="#f8dcd0"/><stop offset="0.6" stop-color="#f4d4c8"/><stop offset="1" stop-color="#f4d4c8"/></linearGradient>
<linearGradient id="grd" x1="0" y1="0" x2="1" y2="0"><stop offset="0" stop-color="#bcd4fa" stop-opacity=".6"/><stop offset="0.35" stop-color="#bcd4fa" stop-opacity=".3"/><stop offset="0.7" stop-color="#78b0f8" stop-opacity=".35"/><stop offset="1" stop-color="#78b0f8" stop-opacity=".45"/></linearGradient>
<radialGradient id="grb" cx="0.5" cy="0.5" r="0.5"><stop offset="0" stop-color="#fff" stop-opacity="1"/><stop offset="0.25" stop-color="#f4f2fc" stop-opacity=".85"/><stop offset="0.6" stop-color="#dce6fb" stop-opacity=".4"/><stop offset="1" stop-color="#c8dcfa" stop-opacity="0"/></radialGradient>
<radialGradient id="gre" cx="0.5" cy="0.5" r="0.5"><stop offset="0" stop-color="#ecae92" stop-opacity=".9"/><stop offset="0.6" stop-color="#f0bca4" stop-opacity=".5"/><stop offset="1" stop-color="#f4d0c0" stop-opacity="0"/></radialGradient>
<linearGradient id="grc" gradientUnits="userSpaceOnUse" x1="0" y1="36" x2="0" y2="67"><stop offset="0" stop-color="#3e6c14"/><stop offset="0.2" stop-color="#4a7c1c"/><stop offset="0.6" stop-color="#46761c"/><stop offset="0.85" stop-color="#5a7a2c"/><stop offset="1" stop-color="#7a7848"/></linearGradient>
<filter id="grg" x="-5%" y="-20%" width="110%" height="140%"><feGaussianBlur stdDeviation="0.5"/></filter>
<filter id="grn" x="0" y="0" width="100%" height="100%"><feTurbulence type="fractalNoise" baseFrequency="0.32 0.5" numOctaves="2" seed="7"/><feColorMatrix values="0 0 0 0 0.1  0 0 0 0 0.2  0 0 0 0 0.02  2.2 2.2 0 0 -1.9"/></filter>
<filter id="grm" x="0" y="0" width="100%" height="100%"><feTurbulence type="fractalNoise" baseFrequency="0.3 0.45" numOctaves="2" seed="21"/><feColorMatrix values="0 0 0 0 0.38  0 0 0 0 0.56  0 0 0 0 0.14  2 2 0 0 -1.9"/></filter>
<clipPath id="grk"><path d="M0 38.5 L20 38 L34 38.5 L42 37 L48 36.3 L54 37 L62 38.5 L90 38 L110 38.5 L134 38 L134 67 L0 67Z"/></clipPath>
<filter id="grh" x="-20%" y="-50%" width="140%" height="200%"><feGaussianBlur stdDeviation="2.5"/></filter>
</defs>
<rect width="134" height="67" fill="url(#gra)"/>
<rect width="134" height="27" fill="url(#grd)"/>
<ellipse cx="46" cy="20" rx="26" ry="17" fill="url(#grb)"/><path d="M4 31 C24 30 36 26 46 17 C56 26 68 30 88 31Z" fill="#fff" opacity=".75" filter="url(#grh)"/>
<ellipse cx="46" cy="34.5" rx="44" ry="6.5" fill="url(#gre)"/>
<path d="M0 38.5 L20 38 L34 38.5 L42 37 L48 36.3 L54 37 L62 38.5 L90 38 L110 38.5 L134 38 L134 67 L0 67Z" fill="url(#grc)" filter="url(#grg)"/>
<g clip-path="url(#grk)"><rect y="36" width="134" height="31" filter="url(#grn)" opacity=".6"/><rect y="36" width="134" height="31" filter="url(#grm)" opacity=".35"/></g>
</svg>
</div><div class="tb">Environment</div></div>
<div class="tile" style="left:156px;top:388px"><svg class="bg" width="143" height="171" viewBox="0 0 143 171"><polygon points="4,0.5 139,0.5 142.5,4 142.5,167 139,170.5 4,170.5 0.5,167 0.5,4" fill="#838b94" stroke="#747c86" stroke-width="1"/></svg><div class="tt">Outdoor Probe 01</div><div class="im" style=""><svg width="134" height="67" viewBox="0 0 134 67"><defs>
<linearGradient id="p1a" x1="0" y1="0" x2="0" y2="1"><stop offset="0" stop-color="#0d0f20"/><stop offset="0.3" stop-color="#11162e"/><stop offset="0.5" stop-color="#161f40"/><stop offset="1" stop-color="#161f40"/></linearGradient>
<radialGradient id="p1b" cx="0.5" cy="0.5" r="0.5"><stop offset="0" stop-color="#5c84d8" stop-opacity=".8"/><stop offset="0.4" stop-color="#3858a8" stop-opacity=".45"/><stop offset="1" stop-color="#1c2a58" stop-opacity="0"/></radialGradient>
<linearGradient id="p1c" gradientUnits="userSpaceOnUse" x1="0" y1="39" x2="0" y2="67"><stop offset="0" stop-color="#662819"/><stop offset="0.3" stop-color="#582216"/><stop offset="1" stop-color="#3a150d"/></linearGradient>
<filter id="p1f" x="-50%" y="-50%" width="200%" height="200%"><feGaussianBlur stdDeviation="1.3"/></filter>
<filter id="p1g" x="-10%" y="-10%" width="120%" height="120%"><feGaussianBlur stdDeviation="0.6"/></filter>
<filter id="p1h" x="-50%" y="-50%" width="200%" height="200%"><feGaussianBlur stdDeviation="2.5"/></filter>
</defs>
<rect width="134" height="67" fill="url(#p1a)"/>
<ellipse cx="38" cy="22" rx="30" ry="16" fill="url(#p1b)"/>
<g filter="url(#p1g)">
<rect x="0" y="32" width="134" height="9" fill="#1a1c20"/>
<path d="M13 33 L22 31 L30 32 L40 31.5 L50 32 L56 30.5 L60 32 L75 32 L88 33 L88 40 L13 40Z" fill="#1e2024"/>
<rect x="55" y="34" width="11" height="6" fill="#5a5e64"/>
<rect x="57" y="28.5" width="4" height="4" fill="#3c4048"/>
<path d="M8 40 L16 34 L28 34 L26 40Z" fill="#4a4644" opacity=".8"/>
<path d="M78 40 L86 35 L94 36 L96 40Z" fill="#56504c" opacity=".8"/>
<!-- right building -->
<path d="M88 40 L88 34 C90 24 96 17 106 15 L134 13 L134 40Z" fill="#162630"/>
<path d="M87.5 35 C89 23 96 14 108 11.5 L134 9 L134 15 L109 17 C99 19 93 25 91 34Z" fill="#d4d4d8"/>
<path d="M90 32 C92 24 98 19 108 17.5 L134 15.5 L134 17.5 L109 19.5 C100 21 95 26 93 33Z" fill="#8c8c94"/>
<rect x="103" y="19" width="9" height="21" fill="#b4b4b8"/>
<rect x="91.5" y="27" width="3" height="11" fill="#a8a8ac"/>
<rect x="112" y="37" width="22" height="2" fill="#2c6c72"/>
<rect x="95" y="36.5" width="8" height="2" fill="#2a5e64"/>
<circle cx="126" cy="23.5" r="1.5" fill="#c8d0d0"/>
<!-- left building -->
<path d="M0 14 C6 17 11 24 13 33 L13 40 L0 40Z" fill="#20262c"/>
<path d="M0 13 C7 16 12 24 13.5 33 L11 33 C9 26 5 21 0 19Z" fill="#d0d0d4"/>
<rect x="3" y="26" width="4" height="13" fill="#84868c"/>
<rect x="9" y="31" width="2.5" height="8" fill="#6c6e74"/>
</g>
<rect x="0" y="39.6" width="134" height="28" fill="url(#p1c)"/>
<rect x="0" y="39" width="134" height="1.5" fill="#2a1410" opacity=".6" filter="url(#p1g)"/>
<!-- sun flare -->
<path d="M24 20 C28 17 34 17 38 19" fill="none" stroke="#a8c8fa" stroke-width="3" stroke-linecap="round" filter="url(#p1f)"/>
<ellipse cx="37" cy="22" rx="9" ry="7" fill="#a8c8fc" filter="url(#p1h)"/>
<path d="M30 17.5 L39 19 L44 29 L41 30 L36 23Z" fill="#fff" filter="url(#p1f)"/>
<ellipse cx="38" cy="21.5" rx="4" ry="4.2" fill="#fff" filter="url(#p1g)"/>
<circle cx="29" cy="16.5" r="1" fill="#c8dcfc" filter="url(#p1g)"/>
<ellipse cx="38" cy="43.5" rx="3" ry="3.6" fill="#fff" filter="url(#p1f)"/>
<ellipse cx="38" cy="43" rx="2" ry="2.6" fill="#fff"  filter="url(#p1g)"/>
</svg>
</div><div class="tb">Environment</div></div>
<div class="tile" style="left:307px;top:388px"><svg class="bg" width="143" height="171" viewBox="0 0 143 171"><polygon points="4,0.5 139,0.5 142.5,4 142.5,167 139,170.5 4,170.5 0.5,167 0.5,4" fill="#838b94" stroke="#747c86" stroke-width="1"/></svg><div class="tt">Outdoor Probe 02</div><div class="im" style=""><svg width="134" height="67" viewBox="0 0 134 67"><defs>
<linearGradient id="p2a" x1="0" y1="0" x2="0" y2="1"><stop offset="0" stop-color="#4e70c4"/><stop offset="0.25" stop-color="#6484cc"/><stop offset="0.5" stop-color="#a4b4dc"/><stop offset="1" stop-color="#c0c8e0"/></linearGradient>
<radialGradient id="p2b" cx="0.5" cy="0.5" r="0.5"><stop offset="0" stop-color="#fff" stop-opacity="1"/><stop offset="0.45" stop-color="#fff" stop-opacity=".95"/><stop offset="0.75" stop-color="#c4d8fc" stop-opacity=".5"/><stop offset="1" stop-color="#88a8ec" stop-opacity="0"/></radialGradient>
<linearGradient id="p2c" gradientUnits="userSpaceOnUse" x1="0" y1="38" x2="0" y2="67"><stop offset="0" stop-color="#66666a"/><stop offset="0.35" stop-color="#505258"/><stop offset="0.7" stop-color="#3a3c42"/><stop offset="1" stop-color="#2c2e34"/></linearGradient>
<linearGradient id="p2d" x1="0" y1="0" x2="1" y2="0"><stop offset="0" stop-color="#2c4064"/><stop offset="0.5" stop-color="#364e78"/><stop offset="1" stop-color="#2a3a5a"/></linearGradient>
<filter id="p2f" x="-10%" y="-10%" width="120%" height="120%"><feGaussianBlur stdDeviation="0.9"/></filter>
<filter id="p2g" x="-30%" y="-30%" width="160%" height="160%"><feGaussianBlur stdDeviation="1.8"/></filter>
</defs>
<rect width="134" height="67" fill="url(#p2a)"/>
<ellipse cx="25" cy="16" rx="25" ry="23" fill="url(#p2b)"/>
<g filter="url(#p2f)">
<!-- trees -->
<path d="M0 30 L5 29 L9 31 L15 30.5 L20 32 L26 33 L26 38 L0 38Z" fill="#2a3828"/>
<path d="M108 32 L113 27 L118 29 L122 25 L127 24 L134 26 L134 38 L108 38Z" fill="#34442e"/>
<rect x="8" y="22" width="0.8" height="10" fill="#404450"/>
<rect x="0" y="32" width="9" height="4" fill="#1a1c20"/>
<rect x="120" y="33" width="14" height="4" fill="#1c1e22"/>
<rect x="10" y="33" width="14" height="2.5" fill="#a8b0b8"/>
<!-- ground -->
<rect x="0" y="37" width="134" height="30" fill="url(#p2c)"/>
<rect x="0" y="36.4" width="21" height="3.4" fill="#47702e"/>
<rect x="110" y="36.4" width="24" height="4" fill="#47702e"/>
</g>
<g filter="url(#p2g)">
<path d="M0 41 L22 40 L28 44 L20 50 L6 54 L0 54Z" fill="#8e846c"/>
<path d="M134 40 L110 40 L106 44 L114 50 L126 53 L134 52Z" fill="#8a8068"/>
<path d="M28 44 C40 52 94 52 106 44 L120 56 L134 58 L134 67 L0 67 L0 58 L14 56Z" fill="#34363c" opacity=".6"/>
</g>
<g filter="url(#p2f)">
<!-- roof -->
<path d="M38 22 C36 10 40 3 52 2.5 L84 2.5 C96 3 100 10 98 24 L92 30 L44 30Z" fill="#2a3038"/>
<path d="M41 12 C50 7 86 7 95 12" stroke="#3a4450" stroke-width="2" fill="none"/>
<!-- stairs -->
<path d="M28 25 L41 25 L41 44 L27 44Z" fill="#484c56"/>
<path d="M29 31 H40 M28 35 H40 M28 39 H40" stroke="#2c2e36" stroke-width="1.2"/>
<path d="M93 28 L100 28 L104 42 L92 42Z" fill="#4a4e56"/>
<path d="M94 32 H101 M94 36 H102 M93 40 H103" stroke="#2c2e36" stroke-width="1.2"/>
<!-- wall -->
<path d="M40 20 C42 12 52 11 67 11 C82 11 92 12 94 20 L94 38 C88 45 76 47.5 67 47.5 C58 47.5 46 45 40 38Z" fill="url(#p2d)"/>
</g>
<rect x="56" y="16" width="16" height="8.5" fill="#c4c8cc" filter="url(#p2f)"/>
<rect x="58" y="18" width="12" height="4.5" fill="#a4a8b0" filter="url(#p2f)"/>
<rect x="63" y="24.5" width="2.4" height="23" fill="#e4e6ea"/>
</svg>
</div><div class="tb">Environment</div></div>
</div>
<div id="sbar"><i id="sthumb"></i><i class="knob2"></i></div>
</div>
</body></html>
